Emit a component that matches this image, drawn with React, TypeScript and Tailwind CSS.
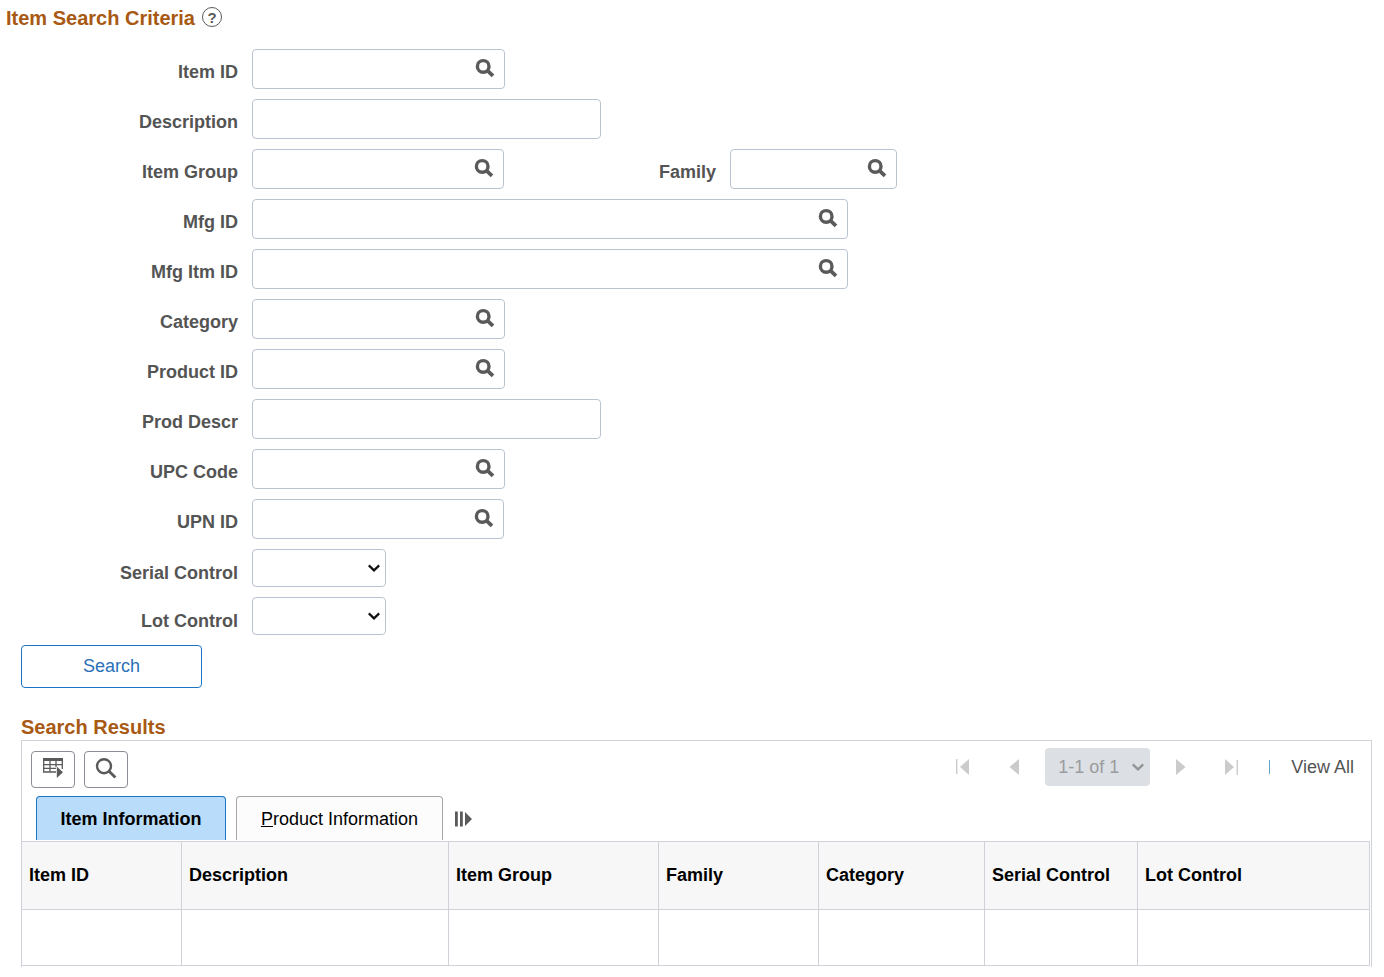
import React from "react";

type FieldProps = {
  id: string;
  label: string;
  labelWidth?: string;
  width: string;
  lookup?: boolean;
};

function LookupIcon() {
  return (
    <svg width="20" height="20" viewBox="0 0 20 20" fill="none" stroke="#5a5a5a" aria-hidden="true">
      <circle cx="8.2" cy="8.4" r="5.8" strokeWidth="3.4" />
      <path d="M12.2 12.4L18 17.8" strokeWidth="3.8" />
    </svg>
  );
}

function Chevron({ color }: { color: string }) {
  return (
    <svg
      width="14"
      height="10"
      viewBox="0 0 14 10"
      fill="none"
      stroke={color}
      strokeWidth="2.2"
      className="pointer-events-none col-start-1 row-start-1 mr-[5px] self-center justify-self-end"
      aria-hidden="true"
    >
      <path d="M1.8 2.4L7 7.4L12.2 2.4" />
    </svg>
  );
}

function Field({ id, label, labelWidth = "w-[238px]", width, lookup = false }: FieldProps) {
  return (
    <div className="flex items-start gap-[14px]">
      <label htmlFor={id} className={`${labelWidth} shrink-0 pt-[11px] text-right font-bold text-[#545454]`}>
        {label}
      </label>
      <div className={`${width} flex h-10 items-start rounded-[4px] border border-[#bac4d1] bg-white`}>
        <input id={id} type="text" className="h-full min-w-0 flex-1 rounded-[4px] bg-transparent px-2 outline-none" />
        {lookup && (
          <button type="button" aria-label={`Look up ${label}`} className="mt-2 mr-[9px] shrink-0">
            <LookupIcon />
          </button>
        )}
      </div>
    </div>
  );
}

function SelectField({ id, label }: { id: string; label: string }) {
  return (
    <div className="flex items-start gap-[14px]">
      <label htmlFor={id} className="w-[238px] shrink-0 pt-3 text-right font-bold text-[#545454]">
        {label}
      </label>
      <div className="grid">
        <select
          id={id}
          className="col-start-1 row-start-1 h-[38px] w-[134px] appearance-none rounded-[4px] border border-[#bac4d1] bg-white px-2 text-black"
        >
          <option value="" />
          <option value="Y">Yes</option>
          <option value="N">No</option>
        </select>
        <Chevron color="#111111" />
      </div>
    </div>
  );
}

function GridActionIcon() {
  return (
    <svg width="22" height="22" viewBox="0 0 22 22" aria-hidden="true">
      <path d="M1 1h20v3H1z" fill="#5a5a5a" />
      <path
        d="M1.7 4v11.5M8 4v11.5M14 4v6M20.3 4v8M1 7.7h20M1 11.3h13M1 15h13"
        fill="none"
        stroke="#5a5a5a"
        strokeWidth="1.3"
      />
      <path d="M14.8 9.4L21 15.2L14.8 21z" fill="#5a5a5a" />
    </svg>
  );
}

function FindIcon() {
  return (
    <svg width="22" height="22" viewBox="0 0 22 22" fill="none" stroke="#5a5a5a" aria-hidden="true">
      <circle cx="9" cy="8.2" r="7" strokeWidth="2.4" />
      <path d="M13.8 13L20.4 19.6" strokeWidth="2.8" />
    </svg>
  );
}

function PagerArrow({ label, flip = false, bar = false }: { label: string; flip?: boolean; bar?: boolean }) {
  return (
    <button type="button" disabled aria-label={label} className="shrink-0">
      <svg width="14" height="18" viewBox="0 0 14 18" className={flip ? "rotate-180" : ""} aria-hidden="true">
        {bar && <path d="M0 1h1.4v15H0z" fill="#cbcbcb" />}
        <path d={bar ? "M13 1v16L4 9z" : "M12 1v16L2.5 9z"} fill="#cbcbcb" />
      </svg>
    </button>
  );
}

const columns = [
  { name: "Item ID", width: "w-[160px]" },
  { name: "Description", width: "w-[267px]" },
  { name: "Item Group", width: "w-[210px]" },
  { name: "Family", width: "w-[160px]" },
  { name: "Category", width: "w-[166px]" },
  { name: "Serial Control", width: "w-[153px]" },
  { name: "Lot Control", width: "" },
];

export default function App() {
  return (
    <main className="bg-white pt-1 pb-3 font-['Liberation_Sans',Arial,sans-serif] text-[18px] leading-6">
      <div className="flex items-start gap-[7px] pl-[6px]">
        <h1 className="text-[20px] leading-7 font-bold text-[#a85914]">Item Search Criteria</h1>
        <button
          type="button"
          aria-label="Help"
          className="mt-[3px] flex size-5 items-center justify-center rounded-full border border-[#5a5a5a] text-[15px] leading-none font-bold text-[#5a5a5a]"
        >
          ?
        </button>
      </div>

      <form className="mt-[17px]" onSubmit={(e) => e.preventDefault()}>
        <div className="flex flex-col gap-[10px]">
          <Field id="item-id" label="Item ID" width="w-[253px]" lookup />
          <Field id="description" label="Description" width="w-[349px]" />
          <div className="flex">
            <Field id="item-group" label="Item Group" width="w-[252px]" lookup />
            <Field id="family" label="Family" labelWidth="w-[212px]" width="w-[167px]" lookup />
          </div>
          <Field id="mfg-id" label="Mfg ID" width="w-[596px]" lookup />
          <Field id="mfg-itm-id" label="Mfg Itm ID" width="w-[596px]" lookup />
          <Field id="category" label="Category" width="w-[253px]" lookup />
          <Field id="product-id" label="Product ID" width="w-[253px]" lookup />
          <Field id="prod-descr" label="Prod Descr" width="w-[349px]" />
          <Field id="upc-code" label="UPC Code" width="w-[253px]" lookup />
          <Field id="upn-id" label="UPN ID" width="w-[252px]" lookup />
          <SelectField id="serial-control" label="Serial Control" />
          <SelectField id="lot-control" label="Lot Control" />
        </div>
        <button
          type="submit"
          className="mt-[10px] ml-[21px] h-[43px] w-[181px] rounded-[4px] border border-[#1b75c4] bg-white pb-[2px] text-[#2a70b8]"
        >
          Search
        </button>
      </form>

      <section className="mt-[27px] mr-3 ml-[21px]">
        <h2 className="text-[20px] leading-[25px] font-bold text-[#a85914]">Search Results</h2>
        <div className="border-x border-t border-[#cfd2d9] pr-px pb-px">
          <div className="flex items-start justify-between pt-[7px] pr-4 pl-[9px]">
            <div className="flex gap-[9px] pt-[3px]">
              <button
                type="button"
                aria-label="Grid actions"
                className="flex h-[37px] w-11 items-start justify-center rounded-[4px] border border-[#8b8e96] pt-[5px]"
              >
                <GridActionIcon />
              </button>
              <button
                type="button"
                aria-label="Find"
                className="flex h-[37px] w-11 items-start justify-center rounded-[4px] border border-[#8b8e96] pt-[6px]"
              >
                <FindIcon />
              </button>
            </div>
            <div className="flex items-center">
              <PagerArrow label="First" bar />
              <div className="ml-[37px] flex">
                <PagerArrow label="Previous" />
              </div>
              <div className="mr-6 ml-6 grid">
                <select
                  aria-label="Rows shown"
                  disabled
                  className="col-start-1 row-start-1 h-[38px] w-[105px] appearance-none rounded-[4px] bg-[#dcdfe3] pl-[13px] text-[#9b9c9e] opacity-100"
                >
                  <option>1-1 of 1</option>
                </select>
                <Chevron color="#929394" />
              </div>
              <PagerArrow label="Next" flip />
              <div className="ml-9 flex">
                <PagerArrow label="Last" flip bar />
              </div>
              <span className="ml-[31px] h-[14px] w-px bg-[#62a5c8]" />
              <a href="#" className="ml-[21px] text-[#545454]">
                View All
              </a>
            </div>
          </div>

          <div role="tablist" className="mt-2 mb-px flex items-stretch gap-[10px] pl-[14px]">
            <button
              type="button"
              role="tab"
              aria-selected="true"
              className="h-11 w-[190px] rounded-t-[4px] border border-b-0 border-[#1b75c4] bg-[#badcfb] font-bold text-black"
            >
              Item Information
            </button>
            <button
              type="button"
              role="tab"
              aria-selected="false"
              className="h-11 w-[207px] rounded-t-[4px] border border-b-0 border-[#a6a6a8] bg-[#fcfcfc] text-black"
            >
              <span className="underline">P</span>roduct Information
            </button>
            <button type="button" aria-label="Show all columns" className="pt-[2px]">
              <svg width="20" height="18" viewBox="0 0 20 18" fill="#5a5a5a" aria-hidden="true">
                <path d="M2 1.5h2.8v15H2zM7 1.5h2.8v15H7zM12 2v14l7-7z" />
              </svg>
            </button>
          </div>

          <table className="w-full table-fixed border-separate border-spacing-0">
            <thead>
              <tr>
                {columns.map((c) => (
                  <th
                    key={c.name}
                    scope="col"
                    className={`${c.width} h-[69px] border-y border-r border-[#cfd2d9] bg-[#f7f7f7] px-[7px] pb-[2px] text-left font-bold text-black`}
                  >
                    {c.name}
                  </th>
                ))}
              </tr>
            </thead>
            <tbody>
              <tr>
                {columns.map((c) => (
                  <td key={c.name} className="h-14 border-r border-b border-[#cfd2d9]" />
                ))}
              </tr>
            </tbody>
          </table>
        </div>
      </section>
    </main>
  );
}
